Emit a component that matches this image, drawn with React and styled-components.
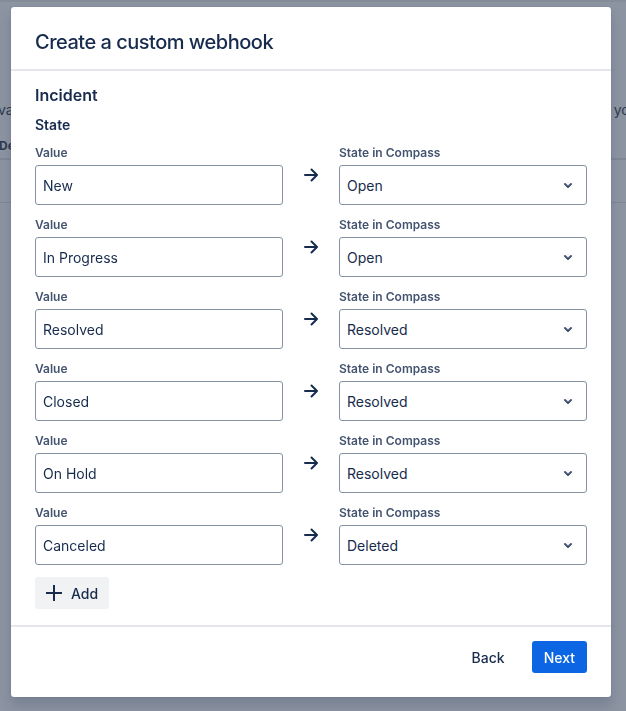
import React from 'react'
import styled, { createGlobalStyle } from 'styled-components'

const GlobalStyle = createGlobalStyle`
  html, body {
    margin: 0;
    padding: 0;
    height: 100%;
  }
  body {
    font-family: Inter, "Noto Sans", "Liberation Sans", sans-serif;
    background: #8c93a1;
    overflow: hidden;
  }
  * { box-sizing: border-box; }
`

// dimmed page behind the dialog
const Page = styled.div`
  width: 626px;
  height: 711px;
  overflow: hidden;
  border-top: 2px solid #858c99;
  padding-top: 98px;
  color: #2f3a4e;
  font-size: 14px;
`

const PageLine = styled.div`
  display: flex;
  justify-content: space-between;
  line-height: 20px;
  margin-left: -2px;
  margin-right: -12px;
  white-space: nowrap;
`

const PageTableHead = styled.div`
  margin-top: 16px;
  padding-bottom: 2px;
  border-bottom: 2px solid #7f8796;
  line-height: 20px;
  font-weight: 700;
  font-size: 12px;
  margin-left: -1px;
`

const PageTableRow = styled.div`
  height: 43px;
  border-bottom: 1px solid #7f8796;
`

const Dialog = styled.div`
  position: fixed;
  left: 11px;
  top: 7px;
  width: 600px;
  height: 690px;
  background: #fff;
  border-radius: 3px;
  box-shadow: 0 8px 12px rgba(9, 30, 66, 0.15), 0 0 1px rgba(9, 30, 66, 0.31);
  display: flex;
  flex-direction: column;
  color: #172b4d;
`

const Header = styled.div`
  height: 64px;
  padding: 0 24px;
  display: flex;
  align-items: center;
  border-bottom: 2px solid #e4e6ea;
`

const Title = styled.h1`
  margin: 0;
  font-size: 20px;
  font-weight: 500;
  line-height: 24px;
  padding-top: 8px;
  letter-spacing: -0.5px;
`

const Body = styled.div`
  padding: 14px 24px 16px;
  border-bottom: 2px solid #e4e6ea;
`

const SectionTitle = styled.h2`
  margin: 0;
  font-size: 16px;
  font-weight: 600;
  line-height: 20px;
`

const SubTitle = styled.h3`
  margin: 10px 0 0;
  font-size: 14px;
  font-weight: 600;
  line-height: 20px;
`

const Rows = styled.div`
  margin-top: 10px;
  display: flex;
  flex-direction: column;
  gap: 12px;
`

const MapRow = styled.div`
  display: grid;
  grid-template-columns: 248px 56px 248px;
  grid-template-rows: 16px 40px;
  row-gap: 4px;
`

const Label = styled.label`
  font-size: 12px;
  font-weight: 600;
  line-height: 16px;
  color: #44546f;
  grid-column: ${p => p.col};
  grid-row: 1;
`

const Field = styled.div`
  grid-row: 2;
  grid-column: ${p => p.col};
  height: 40px;
  border: 1px solid #8590a2;
  border-radius: 3px;
  display: flex;
  align-items: center;
  justify-content: space-between;
  padding: 0 6px 0 7px;
  font-size: 14px;
  color: #172b4d;
  background: #fff;
`

const ArrowCell = styled.div`
  grid-row: 2;
  grid-column: 2;
  display: flex;
  justify-content: center;
  margin-top: -2px;
`

const AddButton = styled.button`
  margin-top: 12px;
  height: 32px;
  border: none;
  border-radius: 3px;
  background: #f1f2f4;
  color: #172b4d;
  font-family: inherit;
  font-size: 14px;
  font-weight: 500;
  display: inline-flex;
  align-items: center;
  gap: 8px;
  padding: 0 11px 0 10px;
  cursor: pointer;
`

const Footer = styled.div`
  padding: 14px 24px 24px;
  display: flex;
  justify-content: flex-end;
  align-items: center;
  gap: 15px;
`

const Button = styled.button`
  height: 32px;
  border: none;
  border-radius: 3px;
  padding: 0 12px;
  font-family: inherit;
  font-size: 14px;
  font-weight: 500;
  cursor: pointer;
  background: ${p => (p.primary ? '#0c66e4' : 'transparent')};
  color: ${p => (p.primary ? '#fff' : '#172b4d')};
`

const ArrowIcon = () => (
  <svg width="24" height="24" viewBox="0 0 24 24">
    <path
      fill="#172b4d"
      d="M11.793 5.793a1 1 0 000 1.414L15.586 11H6a1 1 0 000 2h9.586l-3.793 3.793a1 1 0 001.414 1.414l5.5-5.5a1 1 0 000-1.414l-5.5-5.5a1 1 0 00-1.414 0z"
    />
  </svg>
)

const ChevronIcon = () => (
  <svg width="24" height="24" viewBox="0 0 24 24">
    <path
      fill="#44546f"
      d="M8.292 10.293a1.009 1.009 0 000 1.419l2.939 2.965c.218.215.5.322.779.322s.556-.107.769-.322l2.93-2.955a1.01 1.01 0 000-1.419.987.987 0 00-1.406 0l-2.298 2.317-2.307-2.327a.99.99 0 00-1.406 0z"
    />
  </svg>
)

const PlusIcon = () => (
  <svg width="18" height="18" viewBox="0 0 18 18">
    <path d="M9 1v16M1 9h16" stroke="#172b4d" strokeWidth="2" />
  </svg>
)

const mappings = [
  { value: 'New', state: 'Open' },
  { value: 'In Progress', state: 'Open' },
  { value: 'Resolved', state: 'Resolved' },
  { value: 'Closed', state: 'Resolved' },
  { value: 'On Hold', state: 'Resolved' },
  { value: 'Canceled', state: 'Deleted' },
]

export default function App() {
  return (
    <>
      <GlobalStyle />
      <Page>
        <PageLine>
          <span>va</span>
          <span>you</span>
        </PageLine>
        <PageTableHead>De</PageTableHead>
        <PageTableRow />
      </Page>
      <Dialog>
        <Header>
          <Title>Create a custom webhook</Title>
        </Header>
        <Body>
          <SectionTitle>Incident</SectionTitle>
          <SubTitle>State</SubTitle>
          <Rows>
            {mappings.map(m => (
              <MapRow key={m.value}>
                <Label col={1}>Value</Label>
                <Label col={3}>State in Compass</Label>
                <Field col={1}>{m.value}</Field>
                <ArrowCell>
                  <ArrowIcon />
                </ArrowCell>
                <Field col={3}>
                  {m.state}
                  <ChevronIcon />
                </Field>
              </MapRow>
            ))}
          </Rows>
          <AddButton>
            <PlusIcon />
            Add
          </AddButton>
        </Body>
        <Footer>
          <Button>Back</Button>
          <Button primary>Next</Button>
        </Footer>
      </Dialog>
    </>
  )
}
